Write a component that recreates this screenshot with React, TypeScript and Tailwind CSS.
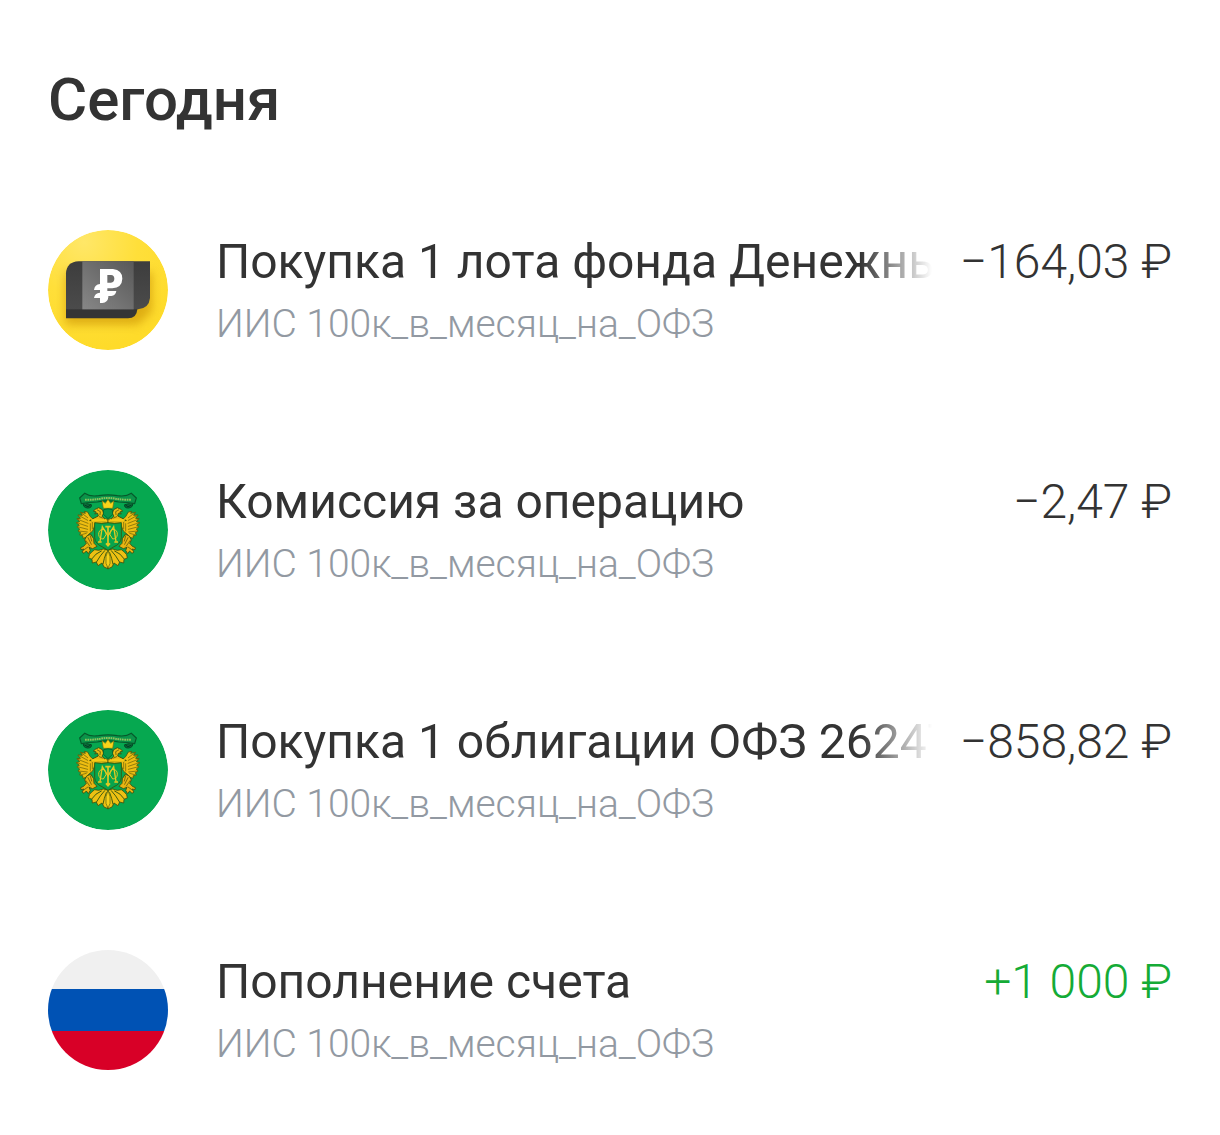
import React from 'react';

type Tone = 'default' | 'income';

interface Operation {
  id: number;
  title: string;
  account: string;
  amount: string;
  tone: Tone;
  icon: React.ReactNode;
}

const MoneyFundIcon: React.FC = () => (
  <svg viewBox="24 24 360 360" className="size-full" aria-hidden="true">
    <defs>
      <radialGradient id="fund-bg" cx="0.3" cy="0.1" r="0.9">
        <stop offset="0" stopColor="#ffe768" />
        <stop offset="0.5" stopColor="#ffdf3a" />
        <stop offset="1" stopColor="#fedb2a" />
      </radialGradient>
      <linearGradient id="fund-note" x1="0" y1="1" x2="1" y2="0">
        <stop offset="0" stopColor="#878787" />
        <stop offset="1" stopColor="#585858" />
      </linearGradient>
      <linearGradient id="fund-side" x1="0" y1="0" x2="0" y2="1">
        <stop offset="0" stopColor="#3d3d3d" />
        <stop offset="1" stopColor="#4b4b4b" />
      </linearGradient>
      <filter id="fund-shadow" x="-30%" y="-30%" width="160%" height="180%">
        <feGaussianBlur stdDeviation="14" />
      </filter>
      <clipPath id="fund-clip">
        <circle cx="204" cy="204" r="180" />
      </clipPath>
    </defs>
    <g clipPath="url(#fund-clip)">
      <rect x="24" y="24" width="360" height="360" fill="url(#fund-bg)" />
      <path d="M76 150H336V268L294 308H76Z" fill="#c98f00" opacity="0.6" filter="url(#fund-shadow)" />
      <path d="M78 258H292V262Q290 289 264 289H78Z" fill="#353535" />
      <path d="M78 262V154Q80 120 116 118H330V228Q327 259 294 262Z" fill="url(#fund-side)" />
      <rect x="127" y="118" width="154" height="144" fill="url(#fund-note)" />
      <path
        d="M180 141H219Q247 144 247 170Q246 197 217 199H202V207H229Q227 221 214 222H205V226Q203 242 187 243H180V228H162Q164 213 180 212V204H162Q164 188 180 186ZM202 159V182H213Q223 180 223 170Q223 160 213 159Z"
        fill="#fff"
        fillRule="evenodd"
      />
    </g>
  </svg>
);

// One half of the eagle, mirrored around x=204 to get the other one.
const EagleHalf: React.FC = () => (
  <g strokeLinejoin="round" strokeLinecap="round">
    <path
      d="M204 184V172L176 166L158 170L151 164L143 150L133 148L136 154L122 151L127 160L114 159L121 169L111 170L119 179L109 182L118 190L111 194L119 201L114 207L122 212L119 219L128 221L129 229L138 226L147 216L158 207L166 186Z"
      fill="#eebd12"
      stroke="#4a5a10"
      strokeWidth="2.5"
    />
    <path
      d="M122 151L143 167M114 159L143 175M111 171L144 184M110 182L143 193M112 194L143 202M116 207L142 210M121 219L139 214M151 185V207M157 180V200"
      fill="none"
      stroke="#7d700c"
      strokeWidth="2.5"
    />
    <path
      d="M196 178L192 168L186 163L191 154L187 143L176 137L166 142L160 147L169 150L164 156L173 154L175 162L163 168L150 175Z"
      fill="#e8bc15"
      stroke="#394b10"
      strokeWidth="2.5"
    />
    <path d="M152 172H198V179H156Z" fill="#f7cb14" />
    <path d="M172 144L181 149L180 158M178 164L187 168" fill="none" stroke="#665d0b" strokeWidth="2.5" />
    <path
      d="M151 217L140 222L134 234L139 244L131 253L122 257L123 263L132 261L126 270L132 274L139 267L145 275L151 265L147 256L158 260L171 253L162 244L161 231Z"
      fill="#e6b412"
      stroke="#3d4c0f"
      strokeWidth="2.5"
    />
    <path d="M144 227L154 247M138 236L149 252M151 221L155 237M131 264L144 255" fill="none" stroke="#6b5f0c" strokeWidth="2.5" />
    <path
      d="M202 264L190 261L176 265L164 263L155 270L148 278L146 288L156 292L157 303L169 300L174 311L186 303L192 315L204 320Z"
      fill="#edc013"
      stroke="#41500f"
      strokeWidth="2.5"
    />
    <path
      d="M194 266Q180 281 170 299M184 267Q166 274 156 290M199 272Q192 289 189 306"
      fill="none"
      stroke="#3f5d10"
      strokeWidth="3"
    />
    <path d="M130 124Q128 137 143 138Q156 138 154 128L140 125" fill="#0a6b38" stroke="#064824" strokeWidth="3" />
    <path d="M135 130L144 134L150 130" fill="none" stroke="#043d25" strokeWidth="3" />
  </g>
);

const TreasuryIcon: React.FC = () => (
  <svg viewBox="24 24 360 360" className="size-full" aria-hidden="true">
    <circle cx="204" cy="204" r="180" fill="#06a850" />
    <EagleHalf />
    <g transform="translate(408 0) scale(-1 1)">
      <EagleHalf />
    </g>
    <path
      d="M134 94Q150 105 176 101Q204 96 232 101Q258 105 274 94L289 108L284 125Q262 121 236 120Q204 113 172 120Q146 121 124 125L119 108Z"
      fill="#0b9449"
      stroke="#06592b"
      strokeWidth="3.5"
    />
    <path d="M135 113Q160 114 182 110Q204 106 226 110Q248 114 273 113" fill="none" stroke="#8fc25c" strokeWidth="6" strokeDasharray="5 2" />
    <path d="M190 139L186 116L196 124L204 112L212 124L222 116L218 139Z" fill="#f9d51a" stroke="#746d0e" strokeWidth="2" />
    <path d="M191 143Q204 138 217 143L218 157L204 170L190 157Z" fill="#07984a" stroke="#06642f" strokeWidth="2.5" />
    <path d="M164 182Q185 186 204 182Q223 186 244 182V227Q242 246 222 254L204 265L186 254Q166 246 164 227Z" fill="#07a44c" stroke="#315f13" strokeWidth="3" />
    <g fill="none" stroke="#e3c922" strokeWidth="4">
      <path d="M180 239L187 194L204 222L221 194L228 239" />
      <path d="M204 192V249M196 194H212M198 244L204 251L210 244" strokeWidth="5" />
      <path d="M189 202Q176 203 176 217Q177 231 190 231L198 218Q199 204 189 202M219 202Q232 203 232 217Q231 231 218 231L210 218Q209 204 219 202" strokeWidth="3" />
      <path d="M174 240H185M223 240H234" strokeWidth="4" />
    </g>
    <path d="M204 264L198 284V304L204 319L210 304V284Z" fill="#f7d01a" stroke="#57600f" strokeWidth="2" />
  </svg>
);

const RussiaFlagIcon: React.FC = () => (
  <div className="flex size-full flex-col">
    <div className="h-[39px] bg-[#f0f0f0]" />
    <div className="h-[42px] bg-[#0052b4]" />
    <div className="flex-1 bg-[#d80027]" />
  </div>
);

const ACCOUNT = 'ИИС 100к_в_месяц_на_ОФЗ';

const operations: Operation[] = [
  { id: 1, title: 'Покупка 1 лота фонда Денежны', account: ACCOUNT, amount: '−164,03 ₽', tone: 'default', icon: <MoneyFundIcon /> },
  { id: 2, title: 'Комиссия за операцию', account: ACCOUNT, amount: '−2,47 ₽', tone: 'default', icon: <TreasuryIcon /> },
  { id: 3, title: 'Покупка 1 облигации ОФЗ 26247', account: ACCOUNT, amount: '−858,82 ₽', tone: 'default', icon: <TreasuryIcon /> },
  { id: 4, title: 'Пополнение счета', account: ACCOUNT, amount: '+1 000 ₽', tone: 'income', icon: <RussiaFlagIcon /> },
];

const OperationRow: React.FC<{ operation: Operation }> = ({ operation }) => {
  const { title, account, amount, tone, icon } = operation;

  return (
    <li className="flex h-30 items-start">
      <div className="size-30 shrink-0 overflow-hidden rounded-full">{icon}</div>
      <div className="ml-12 min-w-0 flex-1">
        <div className="flex gap-7">
          <div className="min-w-0 flex-1 overflow-hidden whitespace-nowrap text-[48px] leading-16 text-[#333333] [mask-image:linear-gradient(to_right,black_calc(100%-72px),transparent)]">
            {title}
          </div>
          <div
            className={`shrink-0 whitespace-nowrap text-[48px] font-light leading-16 ${
              tone === 'income' ? 'text-[#15ab36]' : 'text-[#333333]'
            }`}
          >
            {amount}
          </div>
        </div>
        <div className="truncate text-[39px] font-light leading-[60px] text-[#9299a2]">{account}</div>
      </div>
    </li>
  );
};

const App: React.FC = () => {
  return (
    <main className="bg-white px-12 pt-16 pb-16 font-[Roboto,sans-serif]">
      <h1 className="text-[60px] font-medium leading-18 text-[#333333]">Сегодня</h1>
      <ul className="mt-[94px] flex flex-col gap-30">
        {operations.map((operation) => (
          <OperationRow key={operation.id} operation={operation} />
        ))}
      </ul>
    </main>
  );
};

export default App;
